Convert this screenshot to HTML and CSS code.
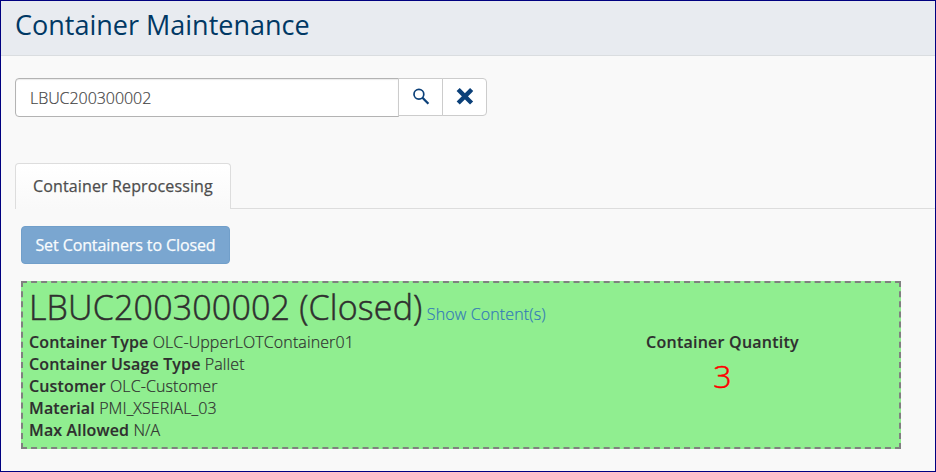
FILE: index.html
```html
<!DOCTYPE html>
<html lang="en">
<head>
<meta charset="utf-8">
<title>Container Maintenance</title>
<link rel="stylesheet" href="styles.css">
</head>
<body>
<div class="page">
  <header class="header"><h1 class="title">Container Maintenance</h1></header>
  <div class="search">
    <input class="search-input" type="text" value="LBUC200300002">
    <button class="icon-btn" aria-label="Search"><svg width="18" height="18" viewBox="0 0 18 18"><circle cx="6.9" cy="6.2" r="4.9" fill="none" stroke="#0b4079" stroke-width="1.7"/><path d="M10.5 9.8L16.4 15.7" stroke="#0b4079" stroke-width="2.3"/></svg></button>
    <button class="icon-btn last" aria-label="Clear"><svg width="18" height="18" viewBox="0 0 18 18"><path d="M3 2.4L14.8 14.2M14.8 2.4L3 14.2" stroke="#0b4079" stroke-width="4.4" stroke-linecap="square" stroke-dasharray="14.6" stroke-dashoffset="-1"/></svg></button>
  </div>
  <nav class="tabs"><div class="tab">Container Reprocessing</div><div class="tab-line"></div></nav>
  <main class="content">
    <button class="action">Set Containers to Closed</button>
    <section class="card">
      <div class="card-head"><span class="name">LBUC200300002 (Closed)</span> <a class="link">Show Content(s)</a></div>
      <div class="card-body">
        <div class="details">
          <div><b>Container Type</b> <span>OLC-UpperLOTContainer01</span></div>
          <div><b>Container Usage Type</b> <span>Pallet</span></div>
          <div><b>Customer</b> <span>OLC-Customer</span></div>
          <div><b>Material</b> <span>PMI_XSERIAL_03</span></div>
          <div><b>Max Allowed</b> <span>N/A</span></div>
        </div>
        <div class="quantity"><b>Container Quantity</b><div class="count">3</div></div>
      </div>
    </section>
  </main>
</div>
</body>
</html>
```
FILE: styles.css
```css
* { box-sizing: border-box; }
body { margin: 0; font-family: "Open Sans", sans-serif; font-size: 16px; font-weight: 300; letter-spacing: .1px; color: #2f2f2f; }
.page { width: 936px; height: 472px; border: 1px solid #000080; background: #f9f9f9; overflow: hidden; }
.header { height: 55px; background: #e8ebf0; border-bottom: 1px solid #dadde0; padding: 5px 0 0 14px; }
.title { margin: 0; font-size: 27px; line-height: 38px; font-weight: 400; letter-spacing: 0; color: #003864; white-space: nowrap; }
.search { display: flex; align-items: flex-start; margin: 22px 0 0 14px; }
.search-input { width: 384px; height: 39px; border: 1px solid #b3b3b3; border-radius: 4px 0 0 4px; background: #fff; box-shadow: inset 0 1px 1px rgba(0,0,0,.08); padding: 0 14px; font: 300 16px "Open Sans", sans-serif; letter-spacing: -.05px; -webkit-text-stroke: .2px; color: #444; outline: none; }
.icon-btn { width: 45px; height: 38px; margin-left: -1px; padding: 0; border: 1px solid #ccc; background: #fff; display: flex; align-items: center; justify-content: center; }
.last { border-radius: 0 4px 4px 0; }
.tabs { display: flex; align-items: flex-end; margin: 46px 0 0 14px; }
.tab { width: 216px; height: 46px; border: 1px solid #ddd; border-bottom: 0; border-radius: 4px 4px 0 0; background: linear-gradient(#fff, #f9f9f9); text-align: center; line-height: 45px; font-size: 16px; font-weight: 400; letter-spacing: .13px; -webkit-text-stroke: .25px; color: #4d4d4d; white-space: nowrap; }
.tab-line { flex: 1; border-bottom: 1px solid #ddd; }
.content { padding: 17px 34px 0 20px; }
.action { display: block; width: 209px; height: 38px; padding: 0; border: 1px solid #719fca; border-radius: 4px; background: #7aa6d0; color: #f8fbfd; font: 400 16px "Open Sans", sans-serif; letter-spacing: -.1px; -webkit-text-stroke: .25px; white-space: nowrap; }
.card { height: 168px; margin-top: 17px; border: 2px dashed #808080; background: #90ee90; padding: 0 6px; white-space: nowrap; }
.card-head { height: 48px; line-height: 48px; }
.card-head, .card-body span { -webkit-text-stroke: .2px; }
.name { font-size: 34px; letter-spacing: .17px; -webkit-text-stroke: .5px; }
.link { color: #337ab7; letter-spacing: .12px; }
.card-body { display: flex; line-height: 22px; }
.details { width: 617px; }
b { font-weight: 600; letter-spacing: .15px; -webkit-text-stroke: .15px; }
.quantity { width: 153px; text-align: center; }
.quantity b { letter-spacing: .24px; }
.count { font-size: 32px; line-height: 46px; color: #f00; -webkit-text-stroke: .5px; }
```
